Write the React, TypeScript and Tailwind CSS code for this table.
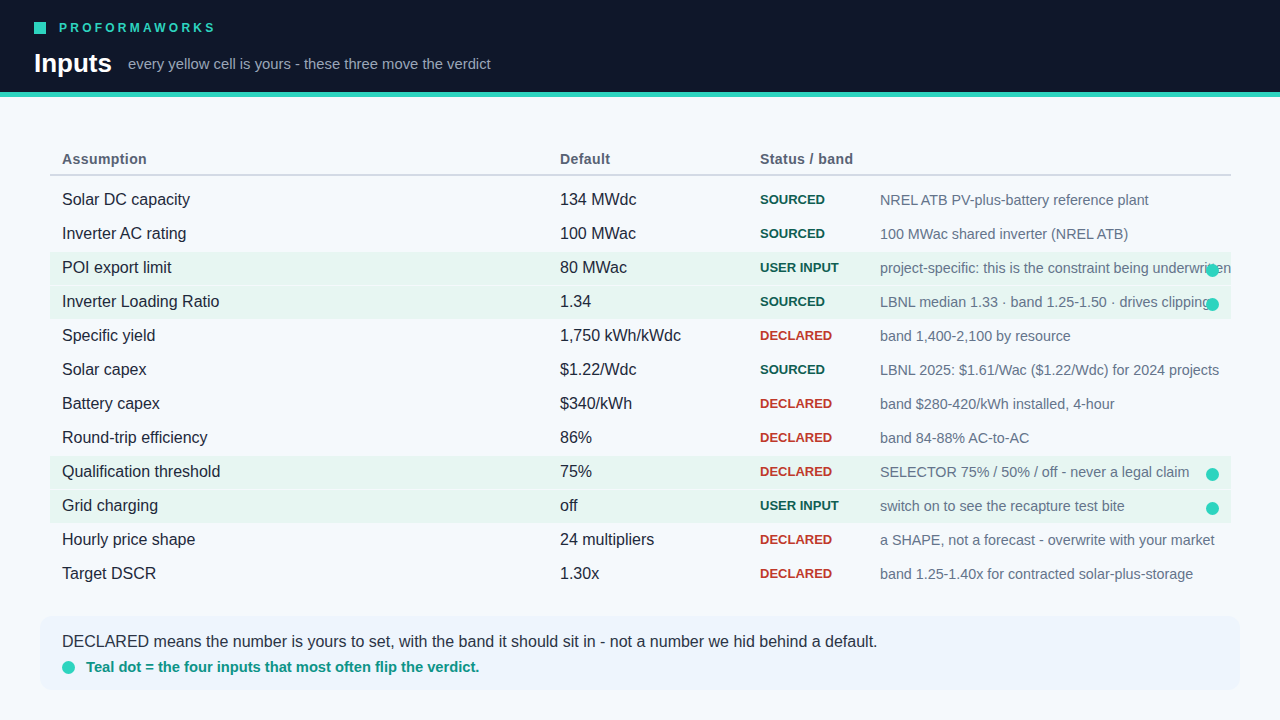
type Status = 'SOURCED' | 'USER INPUT' | 'DECLARED';

interface Row {
  name: string;
  value: string;
  status: Status;
  band: string;
  key?: boolean;
}

const rows: Row[] = [
  { name: 'Solar DC capacity', value: '134 MWdc', status: 'SOURCED', band: 'NREL ATB PV-plus-battery reference plant' },
  { name: 'Inverter AC rating', value: '100 MWac', status: 'SOURCED', band: '100 MWac shared inverter (NREL ATB)' },
  { name: 'POI export limit', value: '80 MWac', status: 'USER INPUT', band: 'project-specific: this is the constraint being underwritten', key: true },
  { name: 'Inverter Loading Ratio', value: '1.34', status: 'SOURCED', band: 'LBNL median 1.33 · band 1.25-1.50 · drives clipping', key: true },
  { name: 'Specific yield', value: '1,750 kWh/kWdc', status: 'DECLARED', band: 'band 1,400-2,100 by resource' },
  { name: 'Solar capex', value: '$1.22/Wdc', status: 'SOURCED', band: 'LBNL 2025: $1.61/Wac ($1.22/Wdc) for 2024 projects' },
  { name: 'Battery capex', value: '$340/kWh', status: 'DECLARED', band: 'band $280-420/kWh installed, 4-hour' },
  { name: 'Round-trip efficiency', value: '86%', status: 'DECLARED', band: 'band 84-88% AC-to-AC' },
  { name: 'Qualification threshold', value: '75%', status: 'DECLARED', band: 'SELECTOR 75% / 50% / off - never a legal claim', key: true },
  { name: 'Grid charging', value: 'off', status: 'USER INPUT', band: 'switch on to see the recapture test bite', key: true },
  { name: 'Hourly price shape', value: '24 multipliers', status: 'DECLARED', band: 'a SHAPE, not a forecast - overwrite with your market' },
  { name: 'Target DSCR', value: '1.30x', status: 'DECLARED', band: 'band 1.25-1.40x for contracted solar-plus-storage' },
];

const Dot = ({ className = '' }: { className?: string }) => (
  <span className={`block w-[13px] h-[13px] rounded-full bg-[#2dd4bf] ${className}`} />
);

const StatusTag = ({ status }: { status: Status }) => (
  <div
    className={`px-3 text-[13px] leading-[16px] font-bold ${status === 'DECLARED' ? 'text-[#c0392b]' : 'text-[#0f5e52]'}`}
  >
    {status}
  </div>
);

export default function App() {
  return (
    <div className="min-h-[720px] bg-[#f5f9fc] font-['Liberation_Sans',Arial,sans-serif]">
      <header className="bg-[#0f172a] border-b-[5px] border-[#2dd4bf] px-[34px] pt-[21px] pb-[13px]">
        <div className="flex items-center gap-[13px] h-[13px]">
          <span className="w-3 h-3 bg-[#2dd4bf]" />
          <span className="text-[12px] font-bold tracking-[0.27em] text-[#2dd4bf] leading-none">PROFORMAWORKS</span>
        </div>
        <div className="flex items-center gap-4 mt-[13px] h-[32px]">
          <h1 className="text-[26px] font-bold text-white leading-none">Inputs</h1>
          <p className="text-[14.8px] text-[#9aa6b8] pt-[2px]">every yellow cell is yours - these three move the verdict</p>
        </div>
      </header>

      <main className="px-10 pt-[49px]">
        <div className="pl-[10px] pr-[9px]">
          <div className="grid grid-cols-[498px_200px_120px_1fr] h-[30px] items-center pb-[2px] border-b-2 border-[#d3dae5] text-[14px] font-bold text-[#586274] tracking-[0.03em]">
            <div className="px-3">Assumption</div>
            <div className="px-3">Default</div>
            <div className="px-3">Status / band</div>
            <div />
          </div>
          <div className="mt-2">
            {rows.map((r) => (
              <div
                key={r.name}
                className={`relative grid grid-cols-[498px_200px_120px_1fr] h-[34px] items-center pb-[2px] border-b border-[#f5f9fc] ${r.key ? 'bg-[#e7f6f2]' : ''}`}
              >
                <div className="px-3 text-[16px] leading-[20px] text-[#1e293b]">{r.name}</div>
                <div className="px-3 text-[16px] leading-[20px] text-[#1e293b]">{r.value}</div>
                <StatusTag status={r.status} />
                <div className="px-3 text-[14.3px] leading-[18px] text-[#64748b] whitespace-nowrap">{r.band}</div>
                {r.key && <Dot className="absolute right-[12px] top-[12px]" />}
              </div>
            ))}
          </div>
        </div>

        <div className="mt-6 rounded-xl bg-[#eef5fd] px-[22px] pt-[15px] pb-[13px]">
          <p className="text-[16px] leading-[22px] text-[#2b3445]">
            DECLARED means the number is yours to set, with the band it should sit in - not a number we hid behind a default.
          </p>
          <div className="flex items-center gap-[11px] h-[20px] mt-[4px]">
            <Dot />
            <span className="text-[14.7px] font-bold text-[#0d9488]">Teal dot = the four inputs that most often flip the verdict.</span>
          </div>
        </div>
      </main>
    </div>
  );
}
